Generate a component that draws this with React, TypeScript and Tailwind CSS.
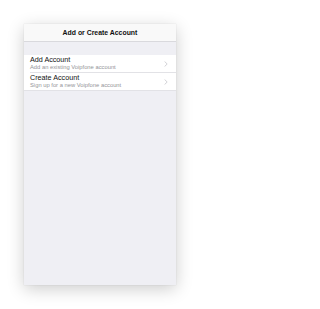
import React from 'react';

type Option = {
  title: string;
  subtitle: string;
};

const options: Option[] = [
  { title: 'Add Account', subtitle: 'Add an existing Voipfone account' },
  { title: 'Create Account', subtitle: 'Sign up for a new Voipfone account' },
];

function Chevron() {
  return (
    <svg width="4" height="6" viewBox="0 0 4 6" className="shrink-0">
      <path d="M0.6 0.5 L3.2 3 L0.6 5.5" fill="none" stroke="#c7c7cc" strokeWidth="0.8" />
    </svg>
  );
}

export default function App() {
  return (
    <div className="w-[200px] h-[309px] bg-white pt-[24px] pl-[24px] font-['Liberation_Sans',Arial,sans-serif]">
      <div className="w-[152px] h-[261px] bg-[#efeff4] shadow-[0_0_1px_rgba(0,0,0,0.15),0_4px_16px_rgba(0,0,0,0.2)] flex flex-col">
        {/* --- Header --- */}
        <div className="h-[18px] bg-[#f9f9f9] border-b border-[#d9d9dd] flex items-center justify-center">
          <span className="text-[6.9px] leading-[8px] font-bold text-[#111]">Add or Create Account</span>
        </div>

        {/* --- Options --- */}
        <div className="mt-[13px] bg-white border-b border-[#e2e2e6]">
          {options.map((o, i) => (
            <div key={o.title} className="pl-[6px]">
              <div
                className={
                  i > 0
                    ? 'h-[18px] pr-[8px] flex items-center border-t border-[#e2e2e6]'
                    : 'h-[17px] pr-[8px] flex items-center'
                }
              >
                <div className="flex-1 flex flex-col">
                  <span className="text-[7.2px] leading-[8px] text-[#111]">{o.title}</span>
                  <span className="text-[5.8px] leading-[7px] text-[#949498]">{o.subtitle}</span>
                </div>
                <Chevron />
              </div>
            </div>
          ))}
        </div>
      </div>
    </div>
  );
}
